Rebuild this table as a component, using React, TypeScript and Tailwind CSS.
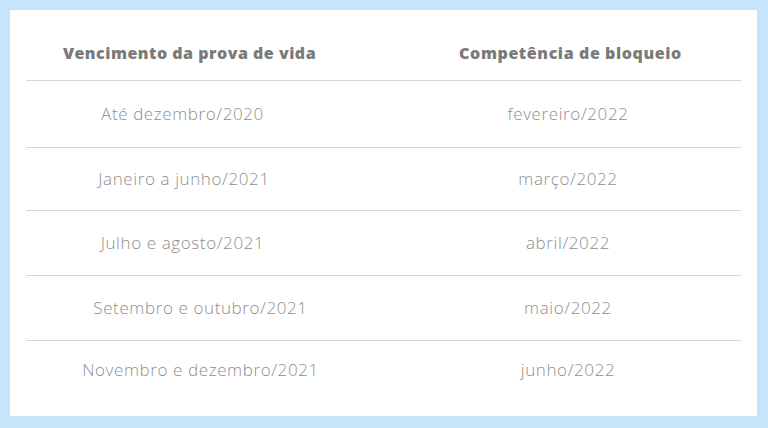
import React from "react";

const rows: { a: string; b: string; h: string; off: string }[] = [
  { a: "Até dezembro/2020", b: "fevereiro/2022", h: "h-[67px]", off: "pr-[25px]" },
  { a: "Janeiro a junho/2021", b: "março/2022", h: "h-[63px]", off: "pr-[22px]" },
  { a: "Julho e agosto/2021", b: "abril/2022", h: "h-[65px]", off: "pr-[25px]" },
  { a: "Setembro e outubro/2021", b: "maio/2022", h: "h-[65px]", off: "pl-[11px]" },
  { a: "Novembro e dezembro/2021", b: "junho/2022", h: "h-[57px]", off: "pl-[11px]" },
];

export default function App() {
  return (
    <div className="w-[768px] h-[428px] bg-[#c6e4fa] pt-[10px] pl-[10px] pr-[11px] pb-[12px]" style={{ fontFamily: '"Open Sans", "Liberation Sans", sans-serif' }}>
      <div className="w-full h-full bg-white px-[16px] pb-[18px]">
        <div className="grid grid-cols-[338px_348px] gap-x-[30px] h-[71px] pt-[33px] border-b border-[#d6d6d6]">
          <div className="text-center text-[16px] leading-[20px] font-extrabold tracking-[0.5px] text-[#7a7a7a] pr-[11px]">Vencimento da prova de vida</div>
          <div className="text-center text-[16px] leading-[20px] font-extrabold tracking-[0.6px] text-[#7a7a7a] pl-[5px]">Competência de bloqueio</div>
        </div>
        {rows.map((r, i) => (
          <div
            key={i}
            className={`grid grid-cols-[338px_348px] gap-x-[30px] items-center ${r.h} ${i < rows.length - 1 ? "border-b border-[#d6d6d6]" : ""}`}
          >
            <div className={`text-center text-[17px] leading-[20px] font-light tracking-[0.6px] text-[#8e8e8e] ${r.off}`}>{r.a}</div>
            <div className="text-center text-[17px] leading-[20px] font-light tracking-[0.6px] text-[#8e8e8e]">{r.b}</div>
          </div>
        ))}
      </div>
    </div>
  );
}
